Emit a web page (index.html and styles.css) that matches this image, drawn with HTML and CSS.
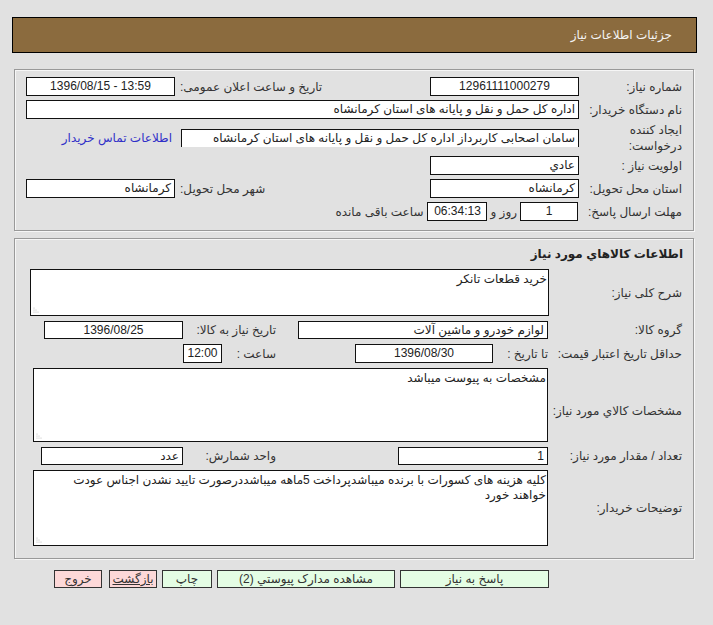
FILE: index.html
```html
<!DOCTYPE html>
<html lang="fa" dir="rtl">
<head>
<meta charset="utf-8">
<title>جزئیات اطلاعات نیاز</title>
<link rel="stylesheet" href="styles.css">
</head>
<body>
<div class="header"><span class="header-title">جزئیات اطلاعات نیاز</span></div>

<section class="panel info">
  <div class="lbl">شماره نیاز:</div>
  <div class="box c2 center">12961111000279</div>
  <div class="lbl-mid">تاریخ و ساعت اعلان عمومی:</div>
  <div class="box c4 center ltr">1396/08/15 - 13:59</div>

  <div class="lbl">نام دستگاه خریدار:</div>
  <div class="box span-all">اداره کل حمل و نقل و پایانه های استان کرمانشاه</div>

  <div class="lbl two">ایجاد کننده<br>درخواست:</div>
  <div class="box creator">سامان  اصحابی کاربرداز اداره کل حمل و نقل و پایانه های استان کرمانشاه</div>
  <a class="contact" href="#">اطلاعات تماس خریدار</a>

  <div class="lbl">اولویت نیاز :</div>
  <div class="box c2">عادي</div>

  <div class="lbl">استان محل تحویل:</div>
  <div class="box c2">کرمانشاه</div>
  <div class="lbl-mid">شهر محل تحویل:</div>
  <div class="box c4">کرمانشاه</div>

  <div class="lbl">مهلت ارسال پاسخ:</div>
  <div class="deadline">
    <div class="box days center">1</div>
    <span class="dl-text">روز و</span>
    <div class="box time center">06:34:13</div>
    <span class="dl-rest">ساعت باقی مانده</span>
  </div>
</section>

<section class="panel goods">
  <h2 class="goods-title">اطلاعات کالاهاي مورد نیاز</h2>
  <div class="goods-grid">
    <div class="lbl">شرح کلی نیاز:</div>
    <div class="area area-a">خرید قطعات تانکر<svg class="grip" width="7" height="7" viewBox="0 0 7 7"><circle cx="1" cy="6" r="0.6"/><circle cx="3" cy="6" r="0.6"/><circle cx="5" cy="6" r="0.6"/><circle cx="1" cy="4" r="0.6"/><circle cx="3" cy="4" r="0.6"/><circle cx="1" cy="2" r="0.6"/></svg></div>

    <div class="lbl">گروه کالا:</div>
    <div class="row">
      <div class="box group">لوازم خودرو و ماشین آلات</div>
      <div class="sub-lbl need-lbl">تاریخ نیاز به کالا:</div>
      <div class="box need-date center">1396/08/25</div>
    </div>

    <div class="lbl">حداقل تاریخ اعتبار قیمت:</div>
    <div class="row">
      <span class="until">تا تاریخ :</span>
      <div class="box until-date center">1396/08/30</div>
      <div class="sub-lbl hour-lbl">ساعت :</div>
      <div class="box hour center">12:00</div>
    </div>

    <div class="lbl lbl-low">مشخصات کالاي مورد نیاز:</div>
    <div class="area area-d">مشخصات به پیوست میباشد<svg class="grip" width="7" height="7" viewBox="0 0 7 7"><circle cx="1" cy="6" r="0.6"/><circle cx="3" cy="6" r="0.6"/><circle cx="5" cy="6" r="0.6"/><circle cx="1" cy="4" r="0.6"/><circle cx="3" cy="4" r="0.6"/><circle cx="1" cy="2" r="0.6"/></svg></div>

    <div class="lbl">تعداد / مقدار مورد نیاز:</div>
    <div class="row">
      <div class="box qty">1</div>
      <div class="sub-lbl unit-lbl">واحد شمارش:</div>
      <div class="box unit">عدد</div>
    </div>

    <div class="lbl">توضیحات خریدار:</div>
    <div class="area area-f">کلیه هزینه های کسورات با برنده میباشدپرداخت 5ماهه میباشددرصورت تایید نشدن اجناس عودت خواهند خورد<svg class="grip" width="7" height="7" viewBox="0 0 7 7"><circle cx="1" cy="6" r="0.6"/><circle cx="3" cy="6" r="0.6"/><circle cx="5" cy="6" r="0.6"/><circle cx="1" cy="4" r="0.6"/><circle cx="3" cy="4" r="0.6"/><circle cx="1" cy="2" r="0.6"/></svg></div>
  </div>
</section>

<div class="actions">
  <button class="btn green b-reply">پاسخ به نیاز</button>
  <button class="btn green b-docs">مشاهده مدارک پیوستي (2)</button>
  <button class="btn green b-print">چاپ</button>
  <button class="btn pink b-back">بازگشت</button>
  <button class="btn pink b-exit">خروج</button>
</div>
</body>
</html>
```

FILE: styles.css
```css
* { box-sizing: border-box; }

html, body {
  margin: 0;
  padding: 0;
}

body {
  background: #e1e1e1;
  font-family: "Liberation Sans", "DejaVu Sans", sans-serif;
  font-size: 12px;
  color: #333;
  direction: rtl;
}

.header {
  margin: 17px 16px 0 12px;
  height: 36px;
  border: 1px solid #000;
  background: #8b6b3e;
  display: flex;
  align-items: center;
  padding-right: 24px;
}

.header-title {
  color: #f4f4f4;
  font-size: 12px;
}

.panel {
  margin: 0 19px 0 14px;
  border: 1px solid #999;
  box-shadow: inset 1px 1px 0 #f6f6f6, 1px 1px 0 #f6f6f6;
}

/* ---------- panel 1 ---------- */
.info {
  margin-top: 16px;
  padding: 7px 0 9px 0;
  display: grid;
  grid-template-columns: 114px 149px 255px 149px 1fr;
  grid-template-rows: 19px 19px 29px 19px 19px 19px;
  row-gap: 4px;
}

.box {
  height: 19px;
  border: 1px solid #111;
  background: #fff;
  color: #222;
  padding: 0 3px;
  line-height: 17px;
  white-space: nowrap;
  overflow: hidden;
  text-align: right;
}

.center { text-align: center; }
.ltr { direction: ltr; }

.lbl {
  grid-column: 1;
  align-self: center;
  padding-right: 11px;
  white-space: nowrap;
  color: #333;
}

.lbl.two { line-height: 16px; }

.lbl-mid {
  grid-column: 3;
  align-self: center;
  text-align: left;
  padding-left: 5px;
  white-space: nowrap;
}

.c2 { grid-column: 2; }
.c4 { grid-column: 4; }
.span-all { grid-column: 2 / 5; }

.creator {
  grid-column: 2 / 4;
  align-self: center;
  margin-left: 6px;
  height: 18px;
  border-bottom: none;
}

.contact {
  grid-column: 4;
  align-self: center;
  padding-right: 3px;
  color: #3030c8;
  text-decoration: none;
  white-space: nowrap;
}

.deadline {
  grid-column: 2 / 6;
  display: flex;
  align-items: center;
}

.days { width: 58px; margin-right: 1px; }
.dl-text { margin: 0 3px; white-space: nowrap; }
.time { width: 60px; }
.dl-rest { margin-right: 4px; white-space: nowrap; }

/* ---------- panel 2 ---------- */
.goods {
  margin-top: 7px;
  padding: 7px 0 12px 0;
}

.goods-title {
  margin: 0 0 6px 0;
  padding-right: 10px;
  font-size: 12px;
  line-height: 17px;
  font-weight: bold;
  color: #222;
}

.goods-grid {
  display: grid;
  grid-template-columns: 144px 1fr;
  grid-template-rows: 47px 18px 19px 74px 18px 76px;
  row-gap: 5px;
}

.lbl-low { margin-top: 12px; }

.area {
  position: relative;
  border: 1px solid #111;
  background: #fff;
  color: #222;
  padding: 2px 1px 0 4px;
  line-height: 15px;
  text-align: right;
  overflow: hidden;
}

.area-a { width: 519px; }
.area-d, .area-f { width: 515px; margin-right: 1px; }

.grip {
  position: absolute;
  left: 2px;
  bottom: 2px;
  fill: #b8b8b8;
}

.row {
  display: flex;
  align-items: stretch;
}

.row .box { height: auto; }

.sub-lbl {
  align-self: center;
  white-space: nowrap;
  text-align: right;
}

.group { width: 250px; margin-right: 1px; }
.need-lbl { width: 115px; padding-right: 22px; }
.need-date { width: 139px; }

.until {
  width: 56px;
  align-self: center;
  padding-right: 1px;
  white-space: nowrap;
}
.until-date { width: 138px; }
.hour-lbl { width: 133px; padding-right: 79px; }
.hour { width: 39px; padding: 0 1px; }

.qty { width: 150px; margin-right: 1px; }
.unit-lbl { width: 215px; padding-right: 122px; }
.unit { width: 142px; }

/* ---------- buttons ---------- */
.actions {
  margin: 11px 164px 0 0;
  display: flex;
  gap: 5px;
}

.btn {
  height: 18px;
  padding: 0;
  border: 1px solid #333;
  font: inherit;
  font-size: 12px;
  line-height: 16px;
  color: #333;
  cursor: pointer;
}

.green { background: #e4fde4; }
.pink { background: #fdd8d8; }

.b-reply { width: 149px; }
.b-docs { width: 178px; }
.b-print { width: 50px; }
.b-back { width: 48px; text-decoration: underline; }
.b-exit { width: 48px; margin-right: 2px; }
```
